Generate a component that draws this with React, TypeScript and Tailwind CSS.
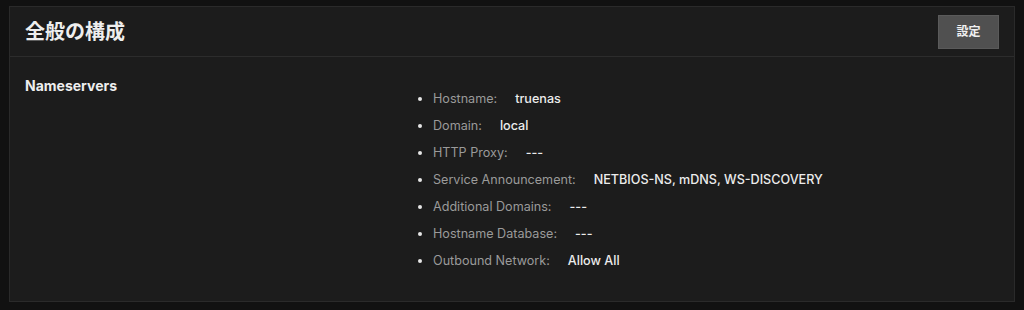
import React from "react";

const items: [string, string][] = [
  ["Hostname:", "truenas"],
  ["Domain:", "local"],
  ["HTTP Proxy:", "---"],
  ["Service Announcement:", "NETBIOS-NS, mDNS, WS-DISCOVERY"],
  ["Additional Domains:", "---"],
  ["Hostname Database:", "---"],
  ["Outbound Network:", "Allow All"],
];

export default function App() {
  return (
    <div
      className="w-[1024px] h-[310px] bg-[#111111] pt-[6px] pl-[9px] pr-[9px]"
      style={{ fontFamily: "Inter, 'Noto Sans CJK JP', sans-serif" }}
    >
      <div className="h-[296px] bg-[#1c1c1c] border border-[#2a2a2a]">
        <div className="h-[50px] flex items-center justify-between pl-[15px] pr-[15px] border-b border-[#2c2c2c]">
          <h1 className="text-[20px] font-bold text-[#eeeeee]">全般の構成</h1>
          <button className="w-[61px] h-[34px] bg-[#505050] border border-[#5a5a5a] text-[12px] font-bold text-[#f0f0f0]">
            設定
          </button>
        </div>
        <div className="flex pl-[15px] pt-[19px]">
          <div className="w-[368px] text-[14px] font-bold text-[#eeeeee] leading-[20px]">Nameservers</div>
          <ul className="list-disc pl-[40px] pt-[15px] marker:text-[#e6e6e6]">
            {items.map(([k, v]) => (
              <li key={k} className="h-[27px] text-[12.6px] leading-[16px] text-[#dddddd]">
                <span className="text-[#9a9a9a] mr-[18px]">{k}</span>
                <span className="font-medium text-[#ececec]">{v}</span>
              </li>
            ))}
          </ul>
        </div>
      </div>
    </div>
  );
}
